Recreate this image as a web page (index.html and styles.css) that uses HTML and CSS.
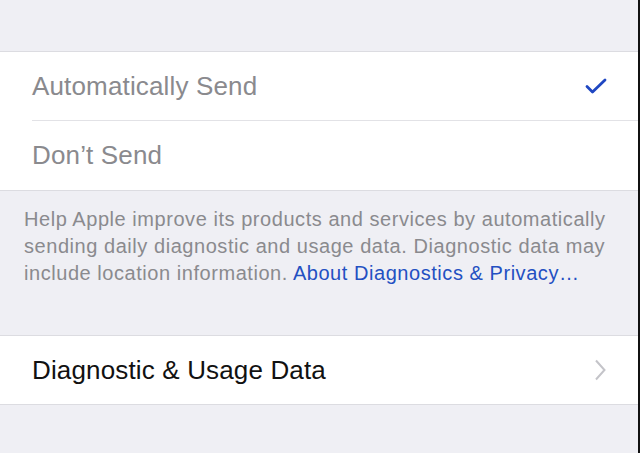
FILE: index.html
```html
<!DOCTYPE html>
<html lang="en">
<head>
<meta charset="utf-8">
<title>Diagnostics &amp; Usage</title>
<link rel="stylesheet" href="styles.css">
</head>
<body>
    <div class="screen">
        <div class="top-space"></div>

        <div class="group">
            <div class="row">
                <span class="label muted">Automatically Send</span>
                <svg class="check" width="22" height="16" viewBox="0 0 22 16">
                    <path d="M2 8.5 L7.5 14 L20 2" fill="none" stroke="#1f47c2" stroke-width="2.8" stroke-linecap="round" stroke-linejoin="round"/>
                </svg>
            </div>
            <div class="sep"></div>
            <div class="row last">
                <span class="label muted">Don&rsquo;t Send</span>
            </div>
        </div>

        <p class="footer">Help Apple improve its products and services by automatically sending daily diagnostic and usage data. Diagnostic data may include location information. <a href="#">About Diagnostics &amp; Privacy&hellip;</a></p>

        <div class="group">
            <div class="row">
                <span class="label">Diagnostic &amp; Usage Data</span>
                <svg class="chevron" width="12" height="22" viewBox="0 0 12 22">
                    <path d="M2 1.5 L10.5 11 L2 20.5" fill="none" stroke="#c4c4c9" stroke-width="2"/>
                </svg>
            </div>
        </div>
    </div>
</body>
</html>
```

FILE: styles.css
```css
html, body{
    margin: 0;
    height: 100%;
}
body{
    background: #efeff4;
    font-family: "Liberation Sans", Arial, sans-serif;
}
.screen{
    min-height: 100%;
    border-right: 2px solid #111;
    box-sizing: border-box;
}
.top-space{
    height: 51px;
}
.group{
    background: #fff;
    border-top: 1px solid #dcdce1;
    border-bottom: 1px solid #dcdce1;
}
.row{
    height: 68px;
    display: flex;
    align-items: center;
    justify-content: space-between;
    padding: 0 31px 0 32px;
}
.row.last{
    height: 69px;
}
.label{
    font-size: 26px;
    letter-spacing: 0.15px;
    color: #111;
}
.label.muted{
    color: #8a8a8e;
}
.sep{
    height: 1px;
    margin-left: 32px;
    background: #e2e2e6;
}
.check{
    display: block;
}
.chevron{
    display: block;
    margin-right: 1px;
}
.footer{
    margin: 0;
    padding: 15px 22px 48px 24px;
    font-size: 20px;
    letter-spacing: 0.55px;
    line-height: 27px;
    color: #8a8a8e;
}
.footer a{
    color: #2350c2;
    text-decoration: none;
}
```
